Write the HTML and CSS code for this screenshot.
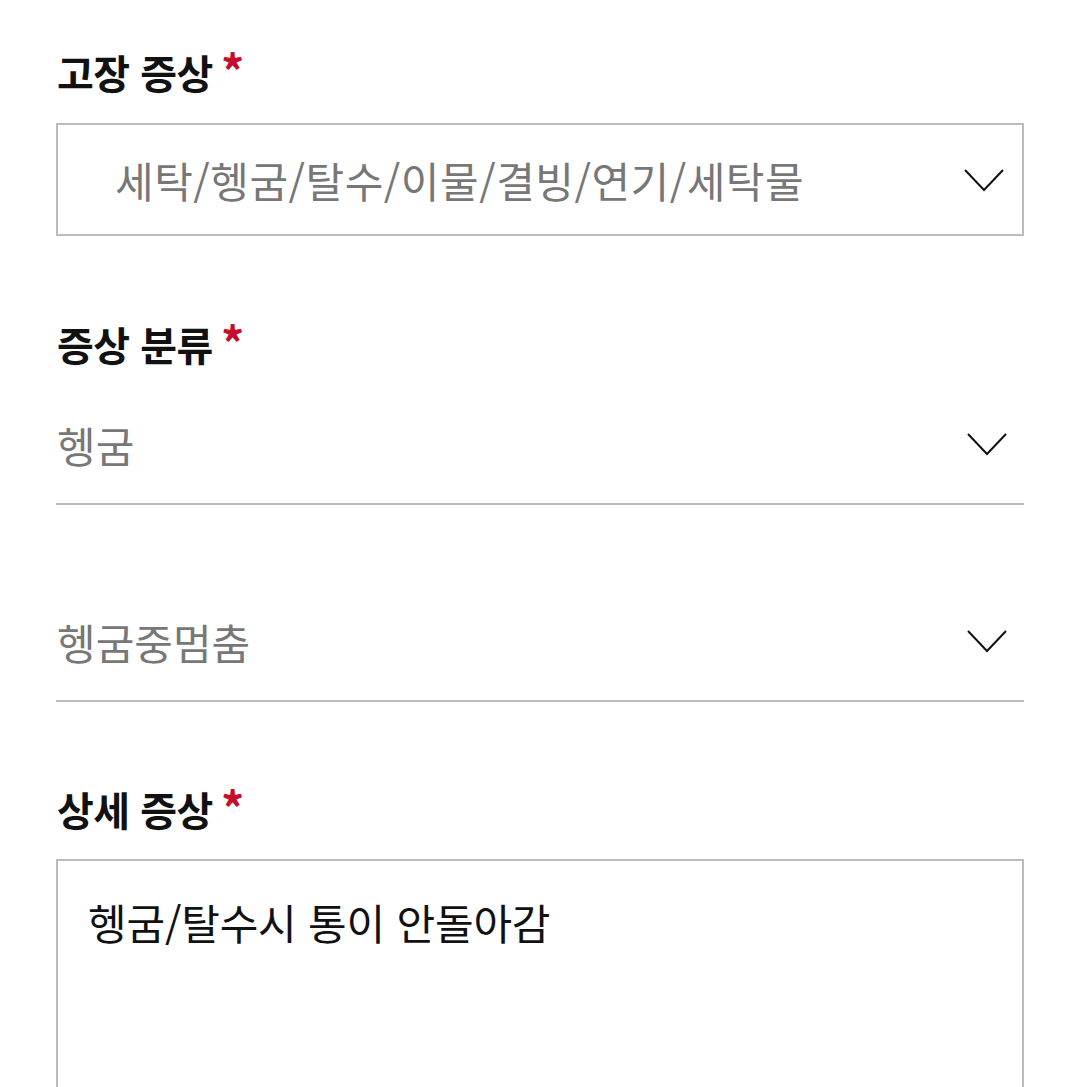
FILE: index.html
```html
<!DOCTYPE html>
<html lang="ko">
<head>
<meta charset="utf-8">
<link rel="stylesheet" href="styles.css">
</head>
<body>
<div class="form">
  <section class="field">
    <h2 class="label"><span>고장 증상</span><span class="req">*</span></h2>
    <div class="select boxed">
      <span class="value wide">세탁/헹굼/탈수/이물/결빙/연기/세탁물</span>
      <svg class="chev" width="40" height="24" viewBox="0 0 40 24"><path d="M1 2 L20 22 L39 2" fill="none" stroke="#111" stroke-width="2"/></svg>
    </div>
  </section>
  <section class="field">
    <h2 class="label"><span>증상 분류</span><span class="req">*</span></h2>
    <div class="select line first">
      <span class="value">헹굼</span>
      <svg class="chev" width="40" height="24" viewBox="0 0 40 24"><path d="M1 2 L20 22 L39 2" fill="none" stroke="#111" stroke-width="2"/></svg>
    </div>
    <div class="select line second">
      <span class="value">헹굼중멈춤</span>
      <svg class="chev" width="40" height="24" viewBox="0 0 40 24"><path d="M1 2 L20 22 L39 2" fill="none" stroke="#111" stroke-width="2"/></svg>
    </div>
  </section>
  <section class="field">
    <h2 class="label"><span>상세 증상</span><span class="req">*</span></h2>
    <div class="textarea">헹굼/탈수시 통이 안돌아감</div>
  </section>
</div>
</body>
</html>
```
FILE: styles.css
```css
html, body {
  margin: 0;
  padding: 0;
  background: #fff;
}
body {
  font-family: "Noto Sans CJK KR", "Noto Sans", sans-serif;
  height: 1087px;
  overflow: hidden;
}
.form {
  padding: 41px 56px 0 56px;
  display: flex;
  flex-direction: column;
}
.field {
  display: flex;
  flex-direction: column;
}
.label {
  margin: 0;
  font-size: 40px;
  font-weight: 700;
  color: #111;
  line-height: 56px;
  height: 56px;
  padding-left: 1px;
  letter-spacing: -0.5px;
  white-space: nowrap;
}
.req {
  color: #c30f2c;
  font-size: 46px;
  margin-left: 8px;
}
.select {
  display: flex;
  align-items: center;
  justify-content: space-between;
  box-sizing: border-box;
}
.value {
  font-size: 42px;
  color: #777;
}
.wide {
  letter-spacing: 0.5px;
}
.boxed {
  margin-top: 26px;
  height: 113px;
  border: 2px solid #bbb;
  padding: 0 18px 0 57px;
}
.line {
  height: 120px;
  border-bottom: 2px solid #bbb;
  padding: 0 17px 0 1px;
}
.field:nth-child(2) {
  margin-top: 77px;
}
.first {
  margin-top: 16px;
}
.field:nth-child(3) {
  margin-top: 76px;
}
.second {
  margin-top: 77px;
}
.textarea {
  margin-top: 25px;
  height: 300px;
  border: 2px solid #bbb;
  padding: 31px 30px;
  font-size: 42px;
  line-height: 60px;
  color: #111;
  box-sizing: border-box;
  letter-spacing: -0.2px;
}
```
